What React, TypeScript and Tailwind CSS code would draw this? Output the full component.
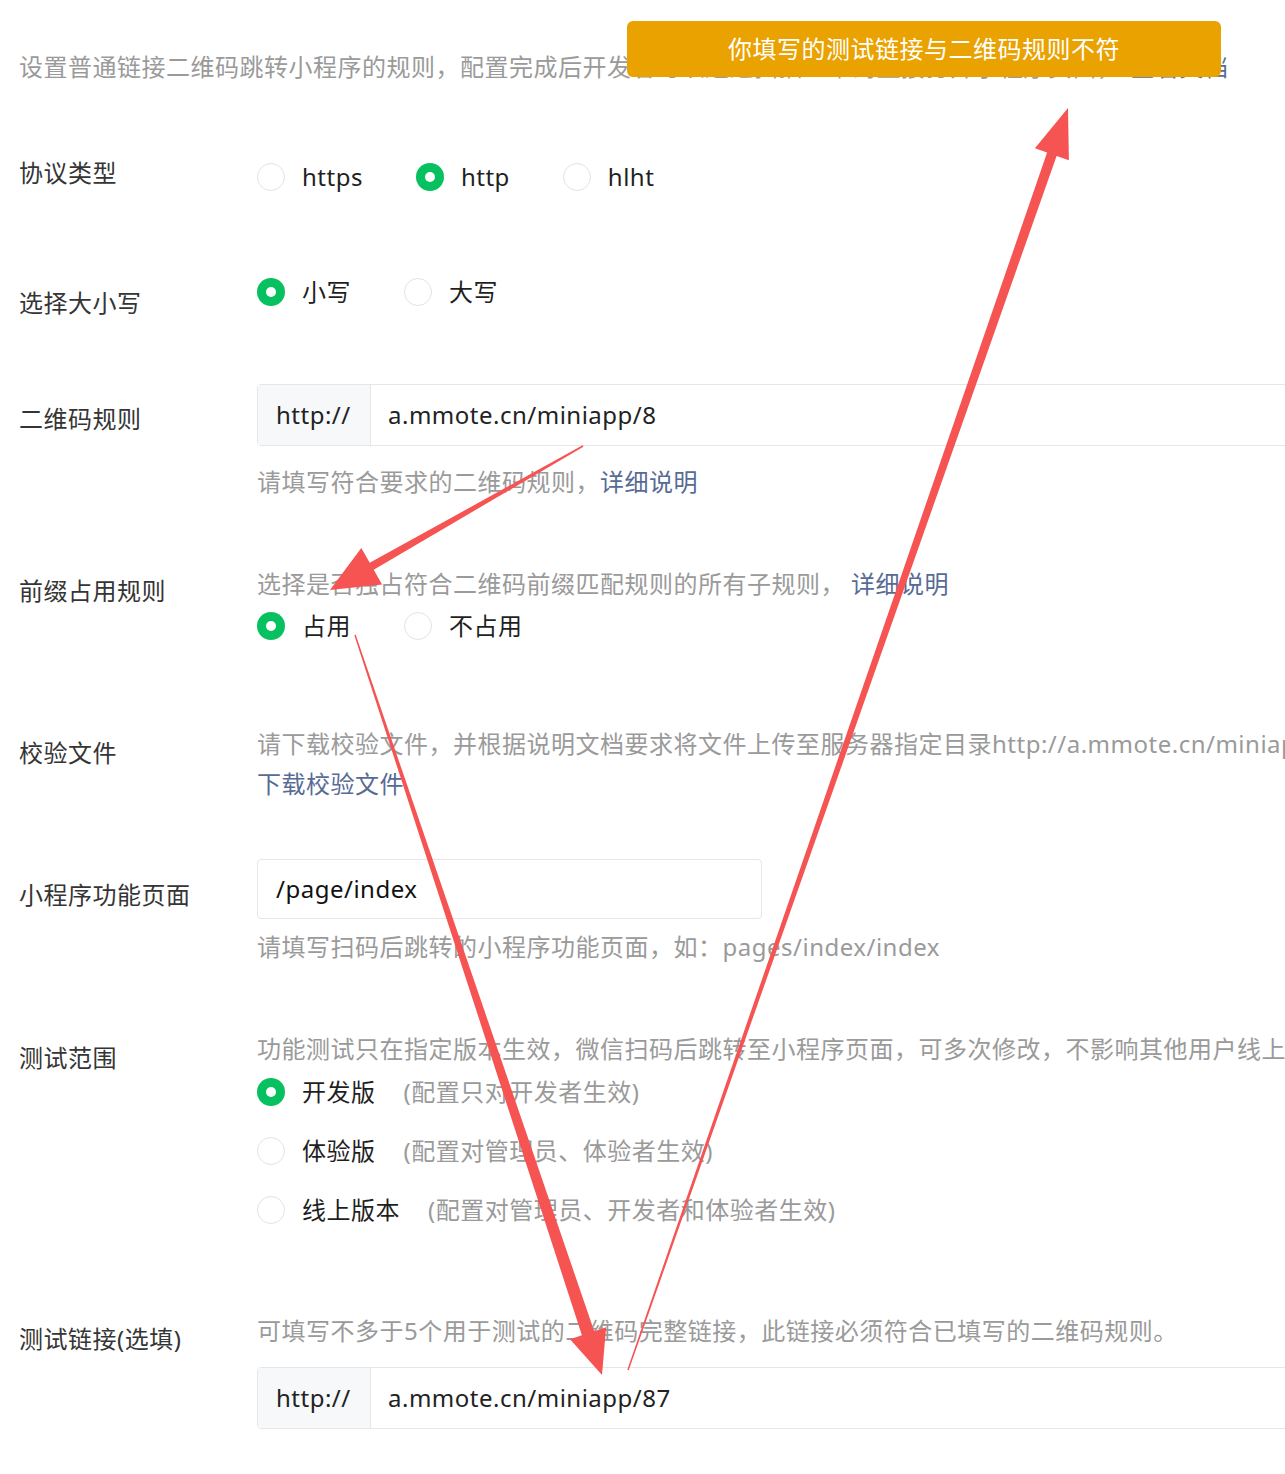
import React from "react";

function Radio({ checked }: { checked?: boolean }) {
  if (checked) {
    return (
      <span className="w-[28px] h-[28px] rounded-full bg-[#07c160] flex items-center justify-center shrink-0">
        <span className="w-[10px] h-[10px] rounded-full bg-white" />
      </span>
    );
  }
  return <span className="w-[28px] h-[28px] rounded-full border border-[#e3e3e3] bg-white shrink-0" />;
}

function Option({ label, checked, note, noteClass }: { label: string; checked?: boolean; note?: string; noteClass?: string }) {
  return (
    <div className="flex items-center">
      <Radio checked={checked} />
      <span className="ml-[17px] text-[#1f1f1f]">{label}</span>
      {note && <span className={noteClass + " text-[#9a9a9a]"}>{note}</span>}
    </div>
  );
}

// tapered arrow: thin tail, fat shaft end, triangle head
function arrowPoints(tx: number, ty: number, px: number, py: number, w0: number, w1: number, hl: number, hw: number) {
  const len = Math.hypot(px - tx, py - ty);
  const dx = (px - tx) / len;
  const dy = (py - ty) / len;
  const nx = -dy;
  const ny = dx;
  const bx = px - dx * hl;
  const by = py - dy * hl;
  const pts = [
    [tx + (nx * w0) / 2, ty + (ny * w0) / 2],
    [bx + (nx * w1) / 2, by + (ny * w1) / 2],
    [bx + nx * hw, by + ny * hw],
    [px, py],
    [bx - nx * hw, by - ny * hw],
    [bx - (nx * w1) / 2, by - (ny * w1) / 2],
    [tx - (nx * w0) / 2, ty - (ny * w0) / 2],
  ];
  return pts.map((p) => p[0].toFixed(1) + "," + p[1].toFixed(1)).join(" ");
}

export default function App() {
  return (
    <div className="relative w-full h-[1474px] overflow-hidden bg-white text-[24px] leading-[32px] tracking-[0.5px] [font-family:'Noto_Sans','Noto_Sans_CJK_SC',sans-serif]">
      <div className="pl-[19px]">
        <p className="mt-[51px] whitespace-nowrap text-[#9a9a9a]">
          设置普通链接二维码跳转小程序的规则，配置完成后开发者可以通过扫描二维码直接打开小程序页面，
          <span className="ml-[9px] text-[#576b95]">查看文档</span>
        </p>

        {/* 协议类型 */}
        <div className="flex items-start mt-[74px]">
          <div className="w-[238px] shrink-0 text-[#353535]">协议类型</div>
          <div className="flex-1 min-w-0 mt-[4px] flex gap-[53px]">
            <Option label="https" />
            <Option label="http" checked />
            <Option label="hlht" />
          </div>
        </div>

        {/* 选择大小写 */}
        <div className="flex items-start mt-[83px]">
          <div className="w-[238px] shrink-0 mt-[11px] text-[#353535]">选择大小写</div>
          <div className="flex-1 min-w-0 flex gap-[53px]">
            <Option label="小写" checked />
            <Option label="大写" />
          </div>
        </div>

        {/* 二维码规则 */}
        <div className="flex items-start mt-[65px]">
          <div className="w-[238px] shrink-0 mt-[19px] text-[#353535]">二维码规则</div>
          <div className="flex-1 min-w-0">
            <div className="flex h-[62px] w-[1100px] border border-[#e6e6e6] rounded-[4px]">
              <div className="w-[113px] shrink-0 bg-[#f7f8fa] border-r border-[#e6e6e6] pl-[18px] flex items-center text-[#222]">http://</div>
              <div className="pl-[17px] flex items-center text-[#222]">a.mmote.cn/miniapp/8</div>
            </div>
            <p className="mt-[20px] whitespace-nowrap text-[#9a9a9a]">
              请填写符合要求的二维码规则，<span className="text-[#576b95]">详细说明</span>
            </p>
          </div>
        </div>

        {/* 前缀占用规则 */}
        <div className="flex items-start mt-[70px]">
          <div className="w-[238px] shrink-0 mt-[7px] text-[#353535]">前缀占用规则</div>
          <div className="flex-1 min-w-0">
            <p className="whitespace-nowrap text-[#9a9a9a]">
              选择是否独占符合二维码前缀匹配规则的所有子规则，<span className="ml-[6px] text-[#576b95]">详细说明</span>
            </p>
            <div className="mt-[10px] flex gap-[53px]">
              <Option label="占用" checked />
              <Option label="不占用" />
            </div>
          </div>
        </div>

        {/* 校验文件 */}
        <div className="flex items-start mt-[82px]">
          <div className="w-[238px] shrink-0 mt-[13px] text-[#353535]">校验文件</div>
          <div className="flex-1 min-w-0 leading-[40px]">
            <p className="whitespace-nowrap text-[#9a9a9a]">
              请下载校验文件，并根据说明文档要求将文件上传至服务器指定目录http://a.mmote.cn/miniapp/
            </p>
            <p className="text-[#576b95]">下载校验文件</p>
          </div>
        </div>

        {/* 小程序功能页面 */}
        <div className="flex items-start mt-[55px]">
          <div className="w-[238px] shrink-0 mt-[20px] text-[#353535]">小程序功能页面</div>
          <div className="flex-1 min-w-0">
            <div className="h-[60px] w-[505px] border border-[#e6e6e6] rounded-[4px] pl-[18px] flex items-center text-[#111]">/page/index</div>
            <p className="mt-[12px] whitespace-nowrap text-[#9a9a9a]">请填写扫码后跳转的小程序功能页面，如：pages/index/index</p>
          </div>
        </div>

        {/* 测试范围 */}
        <div className="flex items-start mt-[70px]">
          <div className="w-[238px] shrink-0 mt-[9px] text-[#353535]">测试范围</div>
          <div className="flex-1 min-w-0">
            <p className="whitespace-nowrap text-[#9a9a9a]">功能测试只在指定版本生效，微信扫码后跳转至小程序页面，可多次修改，不影响其他用户线上使用</p>
            <div className="mt-[11px] flex flex-col gap-[27px]">
              <Option label="开发版" checked note="(配置只对开发者生效)" noteClass="ml-[28px]" />
              <Option label="体验版" note="(配置对管理员、体验者生效)" noteClass="ml-[28px]" />
              <Option label="线上版本" note="(配置对管理员、开发者和体验者生效)" noteClass="ml-[28px]" />
            </div>
          </div>
        </div>

        {/* 测试链接 */}
        <div className="flex items-start mt-[89px]">
          <div className="w-[238px] shrink-0 mt-[8px] text-[#353535]">测试链接(选填)</div>
          <div className="flex-1 min-w-0">
            <p className="whitespace-nowrap text-[#9a9a9a]">可填写不多于5个用于测试的二维码完整链接，此链接必须符合已填写的二维码规则。</p>
            <div className="mt-[20px] flex h-[62px] w-[1100px] border border-[#e6e6e6] rounded-[4px]">
              <div className="w-[113px] shrink-0 bg-[#f7f8fa] border-r border-[#e6e6e6] pl-[18px] flex items-center text-[#222]">http://</div>
              <div className="pl-[17px] flex items-center text-[#222]">a.mmote.cn/miniapp/87</div>
            </div>
          </div>
        </div>
      </div>

      {/* annotation arrows */}
      <svg className="absolute left-0 top-0 pointer-events-none" width="1285" height="1474" viewBox="0 0 1285 1474">
        <polygon fill="#f65353" points={arrowPoints(583, 446, 330, 590, 1.5, 8, 48, 21)} />
        <polygon fill="#f65353" points={arrowPoints(355, 635, 602, 1375, 1.5, 13, 44, 19)} />
        <polygon fill="#f65353" points={arrowPoints(628, 1370, 1068, 108, 1.5, 10, 49, 18)} />
      </svg>

      {/* toast */}
      <div className="absolute left-[627px] top-[21px] w-[594px] h-[56px] rounded-[6px] bg-[#e9a200] flex items-center justify-center text-white">
        你填写的测试链接与二维码规则不符
      </div>
    </div>
  );
}
